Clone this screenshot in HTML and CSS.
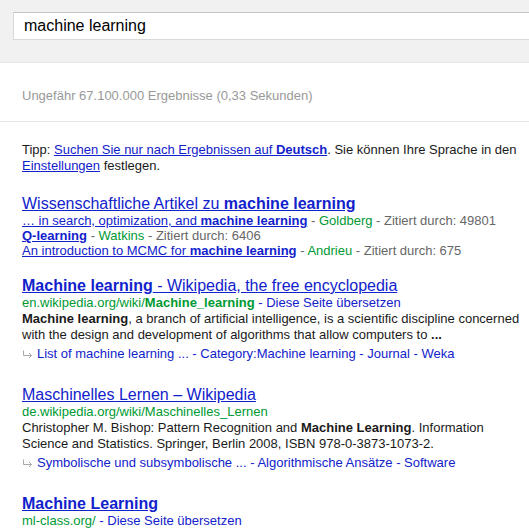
FILE: index.html
```html
<!DOCTYPE html>
<html lang="de">
<head>
<meta charset="utf-8">
<title>machine learning - Google-Suche</title>
<link rel="stylesheet" href="styles.css">
</head>
<body>
<header class="top">
  <div class="searchbox">machine learning</div>
</header>
<div class="stats">Ungefähr 67.100.000 Ergebnisse (0,33 Sekunden)</div>
<div class="rule"></div>
<main class="results">
  <p class="tip">Tipp: <a class="u" href="#">Suchen Sie nur nach Ergebnissen auf <b>Deutsch</b></a>. Sie können Ihre Sprache in den<br><a class="u" href="#">Einstellungen</a> festlegen.</p>

  <div class="result r1">
    <a class="title" href="#">Wissenschaftliche Artikel zu <b>machine learning</b></a>
    <div class="sch"><a class="u" href="#">… in search, optimization, and <b>machine learning</b></a> - <span class="green">Goldberg</span> - Zitiert durch: 49801</div>
    <div class="sch"><a class="u" href="#"><b>Q-learning</b></a> - <span class="green">Watkins</span> - Zitiert durch: 6406</div>
    <div class="sch"><a class="u" href="#">An introduction to MCMC for <b>machine learning</b></a> - <span class="green">Andrieu</span> - Zitiert durch: 675</div>
  </div>

  <div class="result r2">
    <a class="title" href="#"><b>Machine learning</b> - Wikipedia, the free encyclopedia</a>
    <div class="url"><span class="green">en.wikipedia.org/wiki/<b>Machine_learning</b></span><span class="blue"> - Diese Seite übersetzen</span></div>
    <div class="snip"><b>Machine learning</b>, a branch of artificial intelligence, is a scientific discipline concerned<br>with the design and development of algorithms that allow computers to <b>...</b></div>
    <div class="links"><svg class="arr" width="11" height="9" viewBox="0 0 11 9"><path d="M1.5 0.5V5.5H9.5M7 3L9.5 5.5L7 8" fill="none" stroke="#a8a8a8" stroke-width="1"/></svg><a href="#">List of machine learning ...</a> - <a href="#">Category:Machine learning</a> - <a href="#">Journal</a> - <a href="#">Weka</a></div>
  </div>

  <div class="result">
    <a class="title" href="#">Maschinelles Lernen – Wikipedia</a>
    <div class="url"><span class="green">de.wikipedia.org/wiki/Maschinelles_Lernen</span></div>
    <div class="snip">Christopher M. Bishop: Pattern Recognition and <b>Machine Learning</b>. Information<br>Science and Statistics. Springer, Berlin 2008, ISBN 978-0-3873-1073-2.</div>
    <div class="links"><svg class="arr" width="11" height="9" viewBox="0 0 11 9"><path d="M1.5 0.5V5.5H9.5M7 3L9.5 5.5L7 8" fill="none" stroke="#a8a8a8" stroke-width="1"/></svg><a href="#">Symbolische und subsymbolische ...</a> - <a href="#">Algorithmische Ansätze</a> - <a href="#">Software</a></div>
  </div>

  <div class="result">
    <a class="title" href="#"><b>Machine Learning</b></a>
    <div class="url"><span class="green">ml-class.org/</span><span class="blue"> - Diese Seite übersetzen</span></div>
  </div>
</main>
</body>
</html>
```
FILE: styles.css
```css
html, body {
  margin: 0;
  padding: 0;
  background: #fff;
  overflow: hidden;
}
body {
  font-family: "Liberation Sans", Arial, sans-serif;
  font-size: 13px;
  color: #1a1a1a;
}
a {
  color: #1122cc;
  text-decoration: none;
}
b { font-weight: bold; }

.top {
  background: #f1f1f1;
  height: 63px;
  border-bottom: 1px solid #e5e5e5;
  padding: 12px 0 0 13px;
  box-sizing: border-box;
}
.searchbox {
  width: 600px;
  height: 28px;
  box-sizing: border-box;
  background: #fff;
  border: 1px solid #d9d9d9;
  border-top-color: #c4c4c4;
  padding-left: 10px;
  font-size: 16px;
  line-height: 26px;
  color: #000;
}
.stats {
  margin: 25px 0 0 22px;
  color: #999;
  line-height: 16px;
}
.rule {
  margin-top: 17px;
  height: 1px;
  background: #e5e5e5;
}
.results {
  padding-left: 22px;
  white-space: nowrap;
}
.tip {
  margin: 20px 0 0;
  line-height: 16px;
}
.u { text-decoration: underline; }
.result { margin-top: 23px; }
.r1 { margin-top: 20px; }
.r2 { margin-top: 18px; }
.title {
  display: block;
  font-size: 16px;
  line-height: 19px;
  text-decoration: underline;
}
.sch {
  line-height: 15px;
  color: #666;
}
.green { color: #009933; }
.blue { color: #1122cc; }
.url { line-height: 16px; }
.snip { line-height: 16px; }
.links {
  margin-top: 3px;
  line-height: 16px;
  color: #1122cc;
}
.arr {
  vertical-align: -1px;
  margin-right: 4px;
}
```
